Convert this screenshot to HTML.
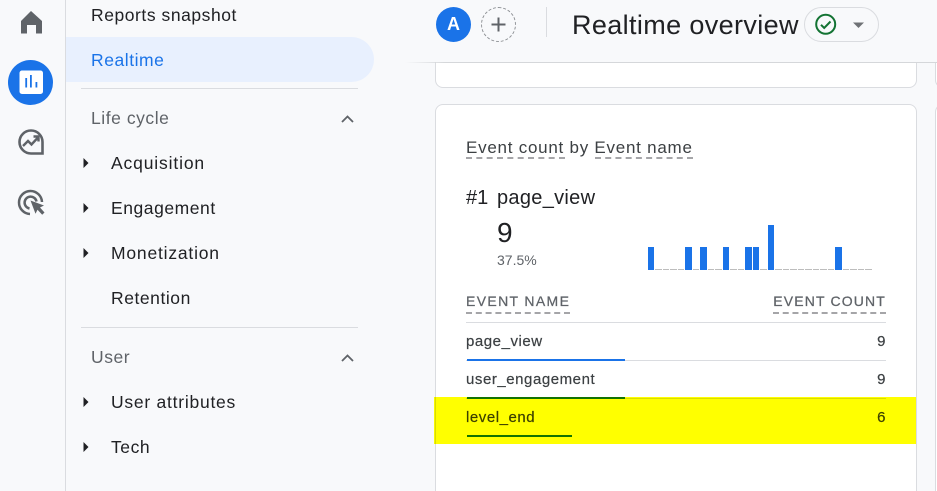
<!DOCTYPE html>
<html><head><meta charset="utf-8">
<style>
html,body{margin:0;padding:0;width:937px;height:491px;overflow:hidden;background:#f8f9fb}
body{font-family:"Liberation Sans",sans-serif;color:#202124}
#w{position:relative;width:937px;height:491px;overflow:hidden}
.a{position:absolute;white-space:nowrap}
.n{font-size:17.5px;line-height:20px;letter-spacing:.55px;color:#202124}
.g{font-size:17.5px;line-height:20px;letter-spacing:.55px;color:#5f6368}
.d{position:absolute;height:0;border-bottom:2px dashed #a5a5a8}
.t{font-size:15px;line-height:18px;color:#3c4043;letter-spacing:.55px;-webkit-text-stroke:.2px currentColor}
.h{font-size:14px;line-height:16px;color:#5f6368;letter-spacing:1.35px;-webkit-text-stroke:.25px currentColor}
.l{position:absolute;background:#dadce0;height:1px}
</style></head><body><div id="w">
<div class="a" style="left:65px;top:0;width:1px;height:491px;background:#dadce0"></div>
<div class="a" style="left:66px;top:37px;width:308px;height:45px;background:#e8f0fe;border-radius:0 23px 23px 0"></div>

<svg class="a" style="left:0;top:0" width="400" height="491" viewBox="0 0 400 491">
<path d="M31 11 L42 21 V33.500 H36 V25 H27 V33.500 H21 V21 Z" fill="#5f6368"/>
<circle cx="30.500" cy="82.500" r="22.500" fill="#1a73e8"/>
<rect x="19.500" y="70.500" width="23.500" height="23.500" rx="2.500" fill="#fff"/>
<path d="M25.300 78h1.800v9.500h-1.800zM30 75h1.800v12.500h-1.800zM35.500 82h1.800v5.500h-1.800z" fill="#1a73e8"/>
<path d="M31 153.500a11.500 11.500 0 1 1 11.500-11.500V153.500Z" fill="none" stroke="#5f6368" stroke-width="2.600"/>
<path d="M23 146l5-5 3.500 3.500 6-6.500M33.500 136.500h5v5" fill="none" stroke="#5f6368" stroke-width="2.400"/>
<path d="M30 214a11.500 11.500 0 1 1 12-12" fill="none" stroke="#5f6368" stroke-width="2.500"/>
<path d="M29.500 208.500a6 6 0 1 1 7-7" fill="none" stroke="#5f6368" stroke-width="2.500"/>
<path d="M30.500 200.500L44 205.500l-4 2 4.500 5-2.300 2.300-4.700-5-2 4Z" fill="#5f6368"/>
<path d="M83.500 158v10l5-5ZM83.500 203v10l5-5ZM83.500 248v10l5-5ZM83.500 397v10l5-5ZM83.500 442v10l5-5Z" fill="#202124"/>
<path d="M342 122l5.500-5.500 5.500 5.500M342 361l5.500-5.500 5.500 5.500" fill="none" stroke="#5f6368" stroke-width="1.800"/>
</svg>

<div class="a n" style="left:91px;top:5px">Reports snapshot</div>
<div class="a n" style="left:91px;top:50px;color:#1a73e8">Realtime</div>
<div class="l" style="left:81px;top:88px;width:277px"></div>
<div class="a g" style="left:91px;top:108px">Life cycle</div>
<div class="a n" style="left:111px;top:153px;letter-spacing:.85px">Acquisition</div>
<div class="a n" style="left:111px;top:198px">Engagement</div>
<div class="a n" style="left:111px;top:243px;letter-spacing:.8px">Monetization</div>
<div class="a n" style="left:111px;top:288px">Retention</div>
<div class="l" style="left:81px;top:327px;width:277px"></div>
<div class="a g" style="left:91px;top:347px">User</div>
<div class="a n" style="left:111px;top:392px;letter-spacing:.75px">User attributes</div>
<div class="a n" style="left:111px;top:437px">Tech</div>

<!-- cards -->
<div class="a" style="left:435px;top:40px;width:480px;height:46px;background:#fff;border:1px solid #dadce0;border-radius:8px"></div>
<div class="a" style="left:935px;top:40px;width:30px;height:46px;background:#fff;border:1px solid #dadce0;border-radius:8px"></div>
<div class="a" style="left:435px;top:104px;width:480px;height:400px;background:#fff;border:1px solid #dadce0;border-radius:8px"></div>
<div class="a" style="left:935px;top:104px;width:30px;height:400px;background:#fff;border:1px solid #dadce0;border-radius:8px"></div>

<!-- header -->
<div class="a" style="left:405px;top:0;width:532px;height:62px;background:#f8f9fb"></div>
<div class="a" style="left:405px;top:62px;width:532px;height:1px;background:linear-gradient(to right,rgba(213,215,218,0),#d5d7da 40px)"></div>
<div class="a" style="left:436px;top:7px;width:35px;height:35px;border-radius:50%;background:#1a73e8;color:#fff;font-size:18px;font-weight:bold;line-height:35px;text-align:center">A</div>
<div class="a" style="left:481px;top:7px;width:33px;height:33px;border-radius:50%;border:1px dashed #8f9296"></div>
<svg class="a" style="left:490px;top:16px" width="17" height="17"><path d="M8.500 1.500v14M1.500 8.500h14" stroke="#5f6368" stroke-width="2" fill="none"/></svg>
<div class="a" style="left:546px;top:7px;width:1px;height:30px;background:#dadce0"></div>
<div class="a" style="left:572px;top:8px;font-size:27px;line-height:34px;letter-spacing:.37px;color:#202124">Realtime overview</div>
<div class="a" style="left:804px;top:7px;width:73px;height:33px;border:1px solid #dadce0;border-radius:18px"></div>
<svg class="a" style="left:812px;top:12px" width="60" height="26">
<circle cx="13.700" cy="12.300" r="9.500" fill="none" stroke="#137333" stroke-width="2"/>
<path d="M9 12.800l3.200 3.200 6.300-6.500" fill="none" stroke="#137333" stroke-width="2"/>
<path d="M41 10.500h11l-5.500 5.500Z" fill="#6f7276"/>
</svg>

<!-- card content -->
<div class="a" style="left:466px;top:138px;font-size:17px;line-height:20px;letter-spacing:.75px;color:#3c4043">Event count by Event name</div>
<div class="d" style="left:466px;top:157px;width:99px"></div>
<div class="d" style="left:595px;top:157px;width:98px"></div>
<div class="a" style="left:466px;top:187px;font-size:20px;line-height:23px;color:#202124">#1</div>
<div class="a" style="left:497px;top:187px;font-size:20px;line-height:23px;letter-spacing:.3px;color:#202124">page_view</div>
<div class="a" style="left:497px;top:217px;font-size:28px;line-height:32px;color:#202124">9</div>
<div class="a" style="left:497px;top:252px;font-size:14px;line-height:17px;color:#5f6368">37.5%</div>

<svg class="a" style="left:640px;top:215px" width="240" height="60">
<g fill="#1a73e8"><rect x="8" y="32" width="6" height="23"/><rect x="45" y="32" width="7" height="23"/><rect x="60" y="32" width="7" height="23"/><rect x="83" y="32" width="6" height="23"/><rect x="105" y="32" width="7" height="23"/><rect x="113" y="32" width="6" height="23"/><rect x="128" y="10" width="6" height="45"/><rect x="195" y="32" width="7" height="23"/></g>
<g fill="#bdbdbd"><rect x="15" y="54" width="7" height="1"/><rect x="23" y="54" width="6" height="1"/><rect x="30" y="54" width="7" height="1"/><rect x="38" y="54" width="6" height="1"/><rect x="53" y="54" width="6" height="1"/><rect x="68" y="54" width="6" height="1"/><rect x="75" y="54" width="7" height="1"/><rect x="90" y="54" width="7" height="1"/><rect x="98" y="54" width="6" height="1"/><rect x="120" y="54" width="7" height="1"/><rect x="135" y="54" width="7" height="1"/><rect x="143" y="54" width="6" height="1"/><rect x="150" y="54" width="7" height="1"/><rect x="158" y="54" width="6" height="1"/><rect x="165" y="54" width="7" height="1"/><rect x="173" y="54" width="6" height="1"/><rect x="180" y="54" width="7" height="1"/><rect x="188" y="54" width="6" height="1"/><rect x="203" y="54" width="6" height="1"/><rect x="210" y="54" width="7" height="1"/><rect x="218" y="54" width="6" height="1"/><rect x="225" y="54" width="7" height="1"/></g>
</svg>

<div class="a h" style="left:466px;top:293px">EVENT NAME</div>
<div class="a h" style="right:51px;top:293px;letter-spacing:1.15px">EVENT COUNT</div>
<div class="d" style="left:466px;top:312px;width:104px"></div>
<div class="d" style="left:773px;top:312px;width:113px"></div>
<div class="l" style="left:466px;top:322px;width:420px"></div>
<div class="a t" style="left:466px;top:333px">page_view</div>
<div class="a t" style="right:51px;top:333px">9</div>
<div class="l" style="left:466px;top:360px;width:420px"></div>
<div class="a" style="left:467px;top:359px;width:158px;height:2px;background:#1a73e8"></div>
<div class="a t" style="left:466px;top:371px">user_engagement</div>
<div class="a t" style="right:51px;top:371px">9</div>
<div class="l" style="left:466px;top:398px;width:420px"></div>
<div class="a" style="left:467px;top:397px;width:158px;height:2px;background:#137333"></div>

<div class="a" style="left:434px;top:397px;width:482px;height:47px;background:#ffff00;mix-blend-mode:multiply"></div>
<div class="a t" style="left:466px;top:409px;color:#3c4000">level_end</div>
<div class="a t" style="right:51px;top:409px;color:#3c4000">6</div>
<div class="a" style="left:467px;top:435px;width:105px;height:2px;background:#137300"></div>
</div></body></html>
